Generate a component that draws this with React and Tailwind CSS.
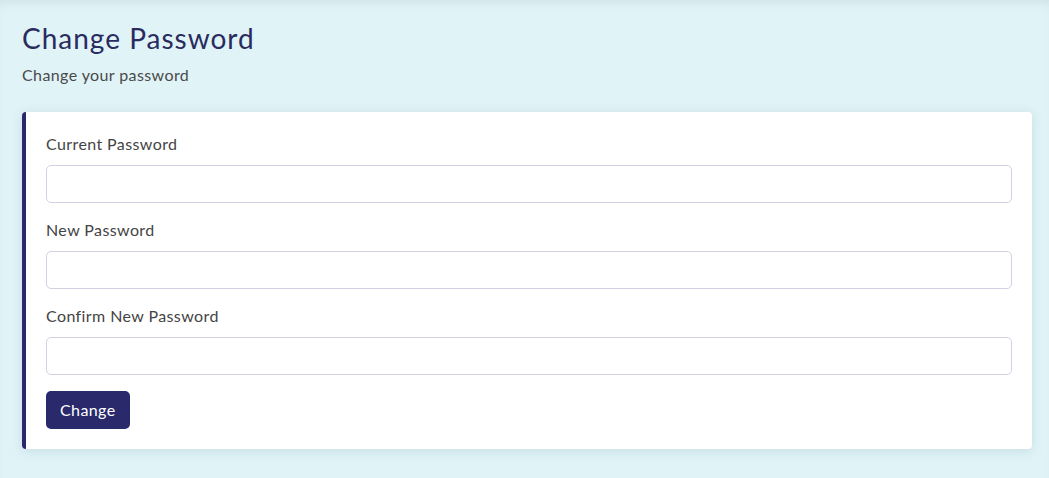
export default function App() {
  const fields = ["Current Password", "New Password", "Confirm New Password"];

  return (
    <div
      className="min-h-[478px] bg-[#e0f3f7] pl-[22px] pr-[17px] pt-[20px] pb-[28px] shadow-[inset_0_8px_12px_-6px_rgba(0,0,0,0.08)]"
      style={{ fontFamily: "Lato, 'Open Sans', sans-serif" }}
    >
      <h1 className="text-[28px] leading-[36px] tracking-[1px] text-[#2a2b5e]">Change Password</h1>
      <p className="mt-[8px] text-[16px] leading-[22px] tracking-[0.4px] text-[#4a4a4a]">Change your password</p>

      <div className="mt-[26px] rounded-[4px] border-l-4 border-[#29296b] bg-white pl-[20px] pr-[20px] pt-[20px] pb-[20px] shadow-[0_2px_12px_rgba(0,80,110,0.12)]">
        <form onSubmit={(e) => e.preventDefault()}>
          {fields.map((f) => (
            <div key={f} className="mb-[15px]">
              <label className="mb-[9px] block text-[16px] leading-[24px] tracking-[0.4px] text-[#444]">{f}</label>
              <input
                type="password"
                className="block h-[38px] w-full rounded-[5px] border border-[#d3d0e3] bg-white px-3 outline-none"
              />
            </div>
          ))}
          <button
            type="submit"
            className="mt-[1px] h-[38px] rounded-[5px] bg-[#29296b] px-[14px] text-[16px] tracking-[0.4px] text-white"
          >
            Change
          </button>
        </form>
      </div>
    </div>
  );
}
